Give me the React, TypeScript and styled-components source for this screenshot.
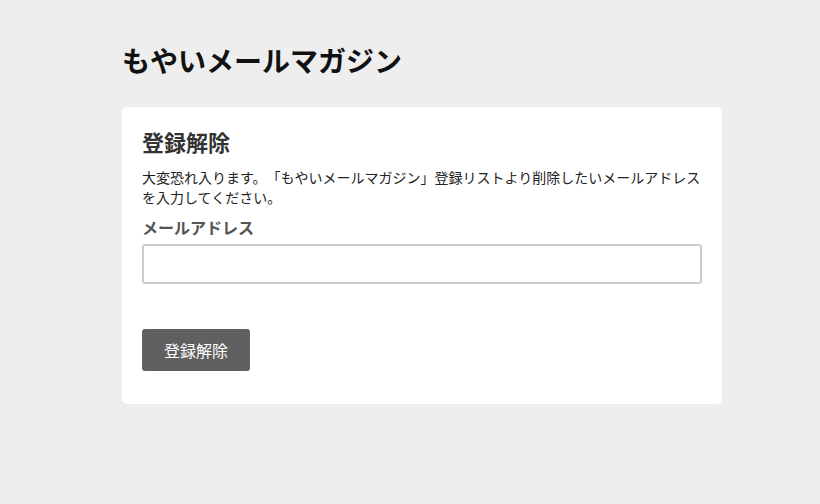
import React from "react";
import styled, { createGlobalStyle } from "styled-components";

const Global = createGlobalStyle`
  html, body { margin: 0; padding: 0; background: #eeeeee; }
  body {
    font-family: "Noto Sans CJK JP", "Noto Sans", sans-serif;
    color: #222;
    text-spacing-trim: space-all;
  }
  * { box-sizing: border-box; }
`;

const Page = styled.div`
  width: 600px;
  margin-left: 122px;
  padding-top: 38px;
`;

const SiteTitle = styled.h1`
  margin: 0 0 25px 0;
  font-size: 28px;
  line-height: 44px;
  font-weight: 700;
  color: #111;
`;

const Card = styled.div`
  background: #fff;
  border-radius: 5px;
  padding: 20px 20px 33px 20px;
`;

const CardTitle = styled.h2`
  margin: 0 0 12px 0;
  font-size: 22px;
  line-height: 28px;
  font-weight: 700;
  color: #333;
`;

const Text = styled.p`
  margin: 0 0 8px 0;
  font-size: 14px;
  line-height: 20px;
  color: #222;
`;

const Label = styled.label`
  display: block;
  font-size: 16px;
  line-height: 24px;
  font-weight: 700;
  color: #555;
  margin-bottom: 5px;
`;

const Input = styled.input`
  display: block;
  width: 100%;
  height: 40px;
  border: 2px solid #cccccc;
  border-radius: 3px;
  padding: 0 8px;
  font-size: 16px;
  font-family: inherit;
  outline: none;
  margin-bottom: 45px;
`;

const Button = styled.button`
  width: 108px;
  height: 42px;
  background: #606060;
  color: #fff;
  border: none;
  border-radius: 3px;
  font-family: inherit;
  font-size: 16px;
  cursor: pointer;
`;

export default function App() {
  return (
    <>
      <Global />
      <Page>
        <SiteTitle>もやいメールマガジン</SiteTitle>
        <Card>
          <CardTitle>登録解除</CardTitle>
          <Text>
            大変恐れ入ります。「もやいメールマガジン」登録リストより削除したいメールアドレスを入力してください。
          </Text>
          <Label htmlFor="email">メールアドレス</Label>
          <Input id="email" type="email" />
          <Button>登録解除</Button>
        </Card>
      </Page>
    </>
  );
}
